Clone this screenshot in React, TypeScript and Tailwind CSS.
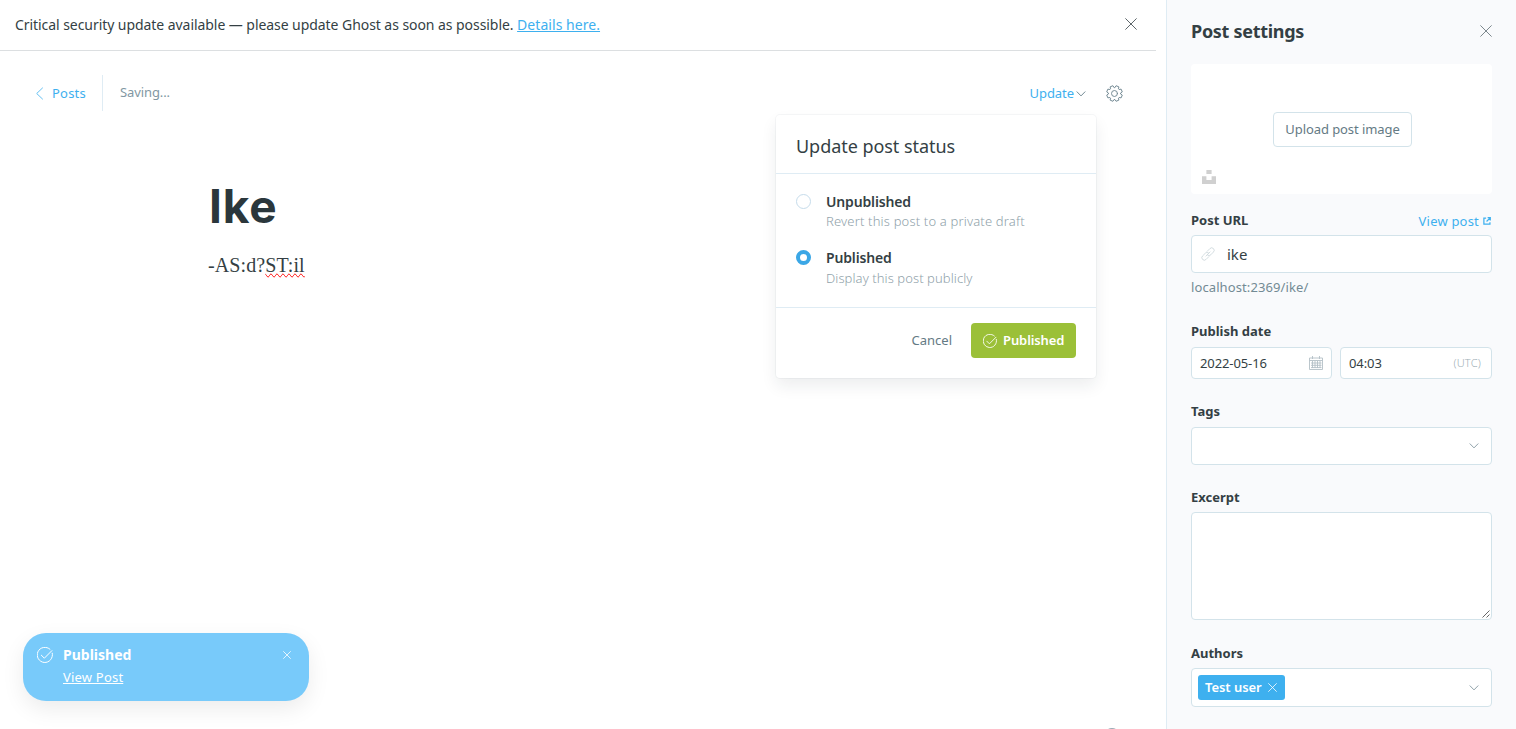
import type { ReactNode } from 'react';

function Cross({ className }: { className: string }) {
  return (
    <svg viewBox="0 0 12 12" fill="none" stroke="currentColor" className={className}>
      <path d="M.4.4l11.2 11.2M11.6.4L.4 11.6" vectorEffect="non-scaling-stroke" strokeWidth="0.8" />
    </svg>
  );
}

function Chevron({ className }: { className: string }) {
  return (
    <svg viewBox="0 0 10 6" fill="none" stroke="currentColor" strokeLinecap="round" strokeLinejoin="round" className={className}>
      <path d="M1 .8L5 4.900 9 .8" strokeWidth="1" />
    </svg>
  );
}

function CheckCircle({ className }: { className: string }) {
  return (
    <svg viewBox="0 0 24 24" fill="none" stroke="currentColor" strokeLinecap="round" strokeLinejoin="round" className={className}>
      <path d="M22.9 9.2A11.4 11.4 0 1 1 19.5 3.400" strokeWidth="1.5" />
      <path d="M6.500 12.300l4.500 4.500L22.300 5.500" strokeWidth="1.500" />
    </svg>
  );
}

// Eight teeth, with a valley pointing straight up.
const gearOutline = Array.from({ length: 8 }, (_, tooth) =>
  [
    [-18, 8.6],
    [-11, 11.2],
    [11, 11.2],
    [18, 8.6],
  ]
    .map(([offset, radius]) => {
      const angle = ((tooth * 45 + 22.5 + offset) * Math.PI) / 180;
      return `${(12 + radius * Math.sin(angle)).toFixed(2)},${(12 - radius * Math.cos(angle)).toFixed(2)}`;
    })
    .join(' '),
).join(' ');

function Gear() {
  return (
    <svg viewBox="0 0 24 24" fill="none" stroke="currentColor" strokeLinecap="round" strokeLinejoin="round" className="h-[17px] w-[17px] text-[#738a94]">
      <circle cx="12" cy="12" r="4.2" strokeWidth="1.4" />
      <polygon points={gearOutline} strokeWidth="1.4" />
    </svg>
  );
}

function Calendar() {
  return (
    <svg viewBox="0 0 14 14" fill="none" stroke="#b3c0c6" className="h-3.5 w-3.5">
      <path strokeWidth="0.9" d="M.5 2h13v11.500H.5zM.5 4.500h13M3.500 0v3M10.500 0v3M3.500 5v7M6 5v7M8.500 5v7M11 5v7M2 7h10.500M2 9.300h10.500M2 11.600h10.500" />
    </svg>
  );
}

function Label({ children }: { children: ReactNode }) {
  return <div className="text-[13px] font-bold leading-4 text-[#343f44]">{children}</div>;
}

function Option({ title, note, on }: { title: string; note: string; on?: boolean }) {
  return (
    <div className="flex gap-[15px]">
      {on ? (
        <span className="mt-[2px] h-[15px] w-[15px] shrink-0 rounded-full border-4 border-[#3ba7e6] bg-white" />
      ) : (
        <span className="mt-[2px] h-[15px] w-[15px] shrink-0 rounded-full border border-[#c6dceb] bg-white" />
      )}
      <div>
        <div className="text-[14px] font-semibold leading-[20px] tracking-[-0.15px] text-[#343f44]">{title}</div>
        <div className={on ? 'text-[13px] font-light leading-[20px] tracking-[0.08px] text-[#90a2aa]' : 'text-[13px] font-light leading-[19px] tracking-[0.17px] text-[#90a2aa]'}>{note}</div>
      </div>
    </div>
  );
}

export default function App() {
  return (
    <div className="relative flex h-[729px] w-[1516px] overflow-hidden bg-white font-['Noto_Sans',sans-serif] text-[#343f44]">
      <main className="w-[1156px]">
        <div className="flex h-[51px] items-center justify-between border-b border-[#dcdfe1] pb-px pl-[15px] pr-[19px]">
          <p className="text-[14px] tracking-[-0.06px]">
            Critical security update available — please update Ghost as soon as possible.{' '}
            <a className="tracking-[0.05px] text-[#3eb0ef] underline">Details here.</a>
          </p>
          <Cross className="mb-[2px] h-3 w-3 text-[#343f44]" />
        </div>
        <header className="mt-6 flex h-9 items-center justify-between pl-[35px] pr-[33px]">
          <div className="flex h-9 items-center">
            <div className="flex h-9 w-[68px] items-center gap-[9px] border-r border-[#dfecf4] text-[13px] text-[#3eb0ef]">
              <svg viewBox="0 0 8 13" fill="none" stroke="currentColor" className="h-[13px] w-2">
                <path d="M7.800.7L1.700 6.500l6.100 5.800" strokeWidth="0.8" />
              </svg>
              <span className="pt-px tracking-[0.2px]">Posts</span>
            </div>
            <span className="ml-[17px] text-[13px] tracking-[-0.1px] text-[#8297a3]">Saving...</span>
          </div>
          <div className="flex items-center">
            <span className="pt-px text-[13px] tracking-[-0.05px] text-[#3eb0ef]">Update</span>
            <Chevron className="ml-[2px] mr-5 mt-px h-[6px] w-[10px] text-[#738a94]" />
            <Gear />
          </div>
        </header>
        <article className="pl-[208px] pt-[64px]">
          <h1 className="ml-px font-['Inter',sans-serif] text-[46px] font-bold leading-[62px] tracking-[0.8px] text-[#2b373c]">Ike</h1>
          <p className="mt-[12px] font-['Liberation_Serif',serif] text-[20px] leading-[32px] tracking-[0.1px]">
            -AS:d?<span className="[text-decoration-line:spelling-error]">ST:il</span>
          </p>
        </article>
      </main>

      <aside className="ml-[10px] w-[350px] border-l border-[#dfecf4] bg-[#f9fafc] pl-6 pr-6">
        <div className="flex h-[64px] items-center justify-between pb-[2px]">
          <h2 className="text-[18px] font-bold tracking-[-0.3px]">Post settings</h2>
          <Cross className="mr-0 h-3 w-3 text-[#5c6a70]" />
        </div>
        <div className="flex h-[130px] flex-col items-center rounded-[4px] bg-white pt-12">
          <button className="ml-[2px] h-[35px] w-[139px] rounded-[4px] border border-[#d3e3ea] text-[13px] tracking-[-0.08px] text-[#647a84]">Upload post image</button>
          <svg viewBox="0 0 14 14" className="ml-[11px] mt-[23px] h-[14px] w-[14px] self-start" fill="#d0d0d0">
            <path d="M4.400 0h5.200v3.900H4.400zM0 6.200h4.400v3.900h5.200V6.200H14V14H0z" />
          </svg>
        </div>
        <div className="mt-[17px] flex h-[19px] items-start justify-between pt-px">
          <Label>Post URL</Label>
          <a className="flex items-center gap-1 pr-px text-[13px] leading-[18px] tracking-[0.2px] text-[#3eb0ef]">
            View post
            <svg viewBox="0 0 9 9" fill="none" stroke="currentColor" className="h-[8px] w-[8px]">
              <path d="M3.500 1.200H1v6.800h6.800V5.800M5.200.8h3v3M8 1L4 5" strokeWidth="1.400" />
            </svg>
          </a>
        </div>
        <div className="mt-[5px] flex h-[38px] items-center rounded-[4px] border border-[#d3e3ea] bg-white pl-[9px] text-[15px]">
          <svg viewBox="0 0 24 24" fill="none" stroke="#c6d2d8" strokeLinecap="round" strokeLinejoin="round" className="mr-[12px] h-[14px] w-[14px]">
            <path strokeWidth="1.300" d="M8.500 15.500l7-7M10.500 7.500l4.800-4.800a4.200 4.200 0 0 1 6 6l-4.800 4.800a4.200 4.200 0 0 1-5 .7M13.500 16.500l-4.800 4.800a4.200 4.200 0 0 1-6-6l4.800-4.800a4.200 4.200 0 0 1 5-.7" />
          </svg>
          ike
        </div>
        <div className="mt-1 text-[13px] leading-[20px] tracking-[0.1px] text-[#738a94]">localhost:2369/ike/</div>
        <div className="mt-[26px]"><Label>Publish date</Label></div>
        <div className="mt-2 flex gap-2 text-[13px]">
          <div className="flex h-8 w-[141px] items-center justify-between rounded-[4px] border border-[#d3e3ea] bg-white px-2">
            <span className="pt-px tracking-[-0.1px]">2022-05-16</span>
            <Calendar />
          </div>
          <div className="flex h-8 flex-1 items-center justify-between rounded-[4px] border border-[#d3e3ea] bg-white pl-2 pr-[10px]">
            <span className="pt-px tracking-[-0.1px]">04:03</span>
            <span className="text-[11px] font-light tracking-[0.2px] text-[#a0afb7]">(UTC)</span>
          </div>
        </div>
        <div className="mt-[24px]"><Label>Tags</Label></div>
        <div className="mt-[8px] flex h-[38px] items-center justify-end rounded-[4px] border border-[#d3e3ea] bg-white pr-3">
          <Chevron className="h-[6px] w-[10px] text-[#90a2aa]" />
        </div>
        <div className="mt-[24px]"><Label>Excerpt</Label></div>
        <div className="mt-[7px] flex h-[108px] items-end justify-end rounded-[4px] border border-[#d3e3ea] bg-white p-px">
          <svg viewBox="0 0 8 8" stroke="#555" className="h-2 w-2">
            <path d="M.5 7.500l7-7M4.500 7.500l3-3" strokeWidth="0.9" />
          </svg>
        </div>
        <div className="mt-[25px]"><Label>Authors</Label></div>
        <div className="mt-[7px] flex h-[39px] items-center justify-between rounded-[4px] border border-[#d3e3ea] bg-white pl-[6px] pr-3">
          <span className="flex h-[25px] w-[87px] items-center justify-between rounded-[3px] bg-[#3eb0ef] pl-[7px] pr-2 text-[13px] font-semibold tracking-[-0.05px] text-white">
            Test user
            <Cross className="h-[9px] w-[9px]" />
          </span>
          <Chevron className="h-[6px] w-[10px] text-[#90a2aa]" />
        </div>
      </aside>

      <section className="absolute left-[776px] top-[115px] h-[263px] w-[320px] rounded-[4px] bg-white shadow-[0_0_0_1px_rgba(99,114,130,0.06),0_8px_16px_rgba(27,39,51,0.08)]">
        <h3 className="h-[59px] border-b border-[#dfecf4] pl-5 pt-[18px] text-[18px] leading-[26px] tracking-[-0.05px]">Update post status</h3>
        <div className="flex h-[134px] flex-col gap-[17px] border-b border-[#dfecf4] px-5 pt-[18px]">
          <Option title="Unpublished" note="Revert this post to a private draft" />
          <Option title="Published" note="Display this post publicly" on />
        </div>
        <footer className="flex items-center justify-end gap-[19px] pr-5 pt-[15px] text-[13px]">
          <span className="text-[#647a84]">Cancel</span>
          <button className="flex h-[35px] w-[105px] items-center gap-[6px] rounded-[4px] bg-[#9bc038] pl-3 font-semibold tracking-[-0.1px] text-white">
            <CheckCircle className="h-[14px] w-[14px]" />
            Published
          </button>
        </footer>
      </section>

      <div className="absolute left-[23px] top-[633px] flex h-[68px] w-[286px] rounded-[23px] bg-[#78cafa] pl-[14px] pr-[18px] pt-[13px] text-white shadow-[0_8px_22px_rgba(0,0,0,0.08)]">
        <CheckCircle className="mt-px h-4 w-4" />
        <div className="ml-[10px] flex-1">
          <div className="text-[14px] font-bold leading-[18px]">Published</div>
          <a className="inline-block pt-1 text-[13px] leading-[18px] tracking-[0.2px] underline">View Post</a>
        </div>
        <Cross className="mt-[5px] h-[8px] w-[8px]" />
      </div>
      <div className="absolute left-[1104px] top-[728px] h-4 w-4 rounded-full bg-[#9aabb5]" />
    </div>
  );
}
